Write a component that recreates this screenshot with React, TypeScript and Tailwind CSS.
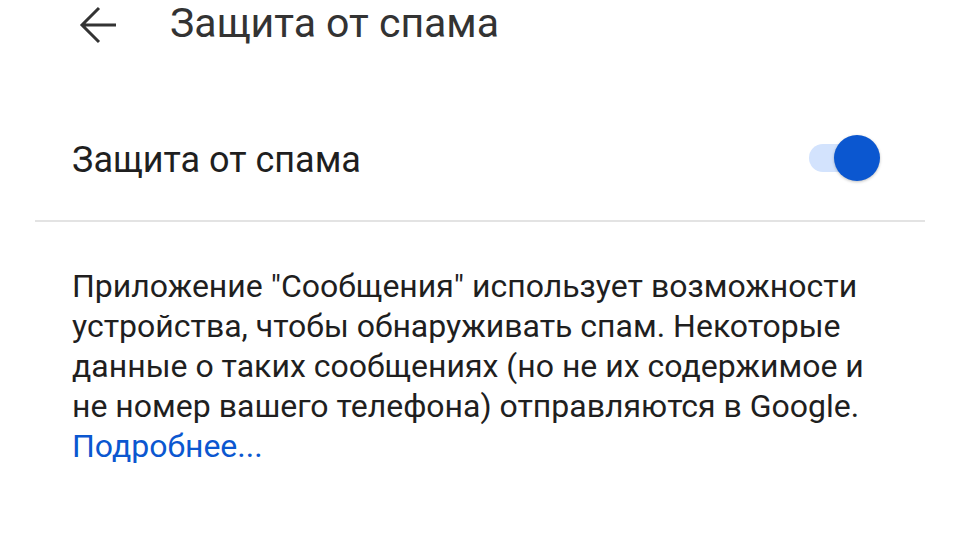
import { useState } from "react";

const SpamToggle = ({ on, onChange }: { on: boolean; onChange: (v: boolean) => void }) => (
  <button
    type="button"
    onClick={() => onChange(!on)}
    className="relative w-[72px] h-[48px] flex items-center -mt-[6px]"
    aria-pressed={on}
  >
    <span className={`ml-[1px] w-[60px] h-[28px] rounded-full ${on ? "bg-[#d3e3fd]" : "bg-[#e0e0e0]"}`} />
    <span
      className={`absolute top-[1px] w-[46px] h-[46px] rounded-full shadow-[0_1px_3px_rgba(0,0,0,0.25)] ${
        on ? "left-[26px] bg-[#0b57d0]" : "left-0 bg-[#f5f5f5]"
      }`}
    />
  </button>
);

const App = () => {
  const [enabled, setEnabled] = useState(true);

  return (
    <div className="w-[960px] h-[540px] bg-white overflow-hidden font-['Roboto',sans-serif] text-[#1f1f1f]">
      {/* Header */}
      <div className="flex items-center h-[52px] pl-[79px]">
        <svg width="40" height="52" viewBox="0 0 40 52" className="text-[#333]">
          <path d="M37 25H4M20 8L3 25l17 17" fill="none" stroke="currentColor" strokeWidth="3" />
        </svg>
        <h1 className="ml-[51px] text-[41px] leading-none text-[#333] -mt-[6px]">Защита от спама</h1>
      </div>

      {/* Toggle row */}
      <div className="flex items-center justify-between h-[100px] pl-[72px] pr-[80px] mt-[59px]">
        <span className="text-[36px] leading-none -mt-[2px]">Защита от спама</span>
        <SpamToggle on={enabled} onChange={setEnabled} />
      </div>

      <div className="mx-[35px] h-[2px] bg-[#e3e3e3] mt-[9px]" />

      {/* Description */}
      <p className="pl-[72px] pr-[30px] mt-[44px] text-[32px] leading-[40px]">
        Приложение "Сообщения" использует возможности
        <br />
        устройства, чтобы обнаруживать спам. Некоторые
        <br />
        данные о таких сообщениях (но не их содержимое и
        <br />
        не номер вашего телефона) отправляются в Google.
        <br />
        <a href="#" className="text-[#0b57d0]">
          Подробнее...
        </a>
      </p>
    </div>
  );
};

export default App;
